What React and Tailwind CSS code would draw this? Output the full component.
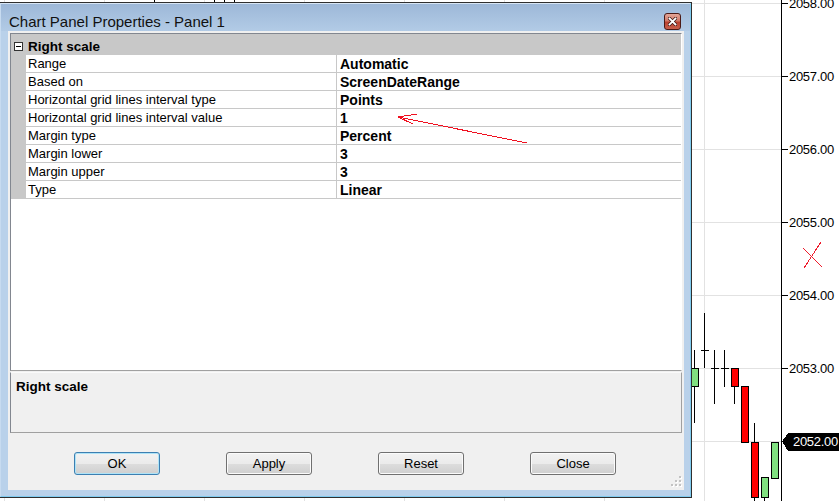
import React from "react";

const gridYs = [3, 76, 149, 222, 295, 368, 441];
const gridXs = [4, 104, 204, 304, 404, 504, 604, 704];
const axisLabels = [
  { y: 3, t: "2058.00" },
  { y: 76, t: "2057.00" },
  { y: 149, t: "2056.00" },
  { y: 222, t: "2055.00" },
  { y: 295, t: "2054.00" },
  { y: 368, t: "2053.00" },
];

// left edge, wick top/bottom, body top/bottom (doji = single tick), fill
const candles = [
  { l: 691, hi: 350, lo: 423, top: 368, bot: 386, fill: "#80e080" },
  { l: 701, hi: 313, lo: 368, doji: 350 },
  { l: 711, hi: 350, lo: 404, doji: 368 },
  { l: 721, hi: 350, lo: 387, doji: 368 },
  { l: 731, hi: 368, lo: 404, top: 368, bot: 386, fill: "#ff0000" },
  { l: 741, hi: 386, lo: 442, top: 386, bot: 442, fill: "#ff0000" },
  { l: 751, hi: 423, lo: 505, top: 442, bot: 497, fill: "#ff0000" },
  { l: 761, hi: 477, lo: 505, top: 477, bot: 497, fill: "#80e080" },
  { l: 771, hi: 442, lo: 478, top: 442, bot: 478, fill: "#80e080" },
];

const rows = [
  ["Range", "Automatic"],
  ["Based on", "ScreenDateRange"],
  ["Horizontal grid lines interval type", "Points"],
  ["Horizontal grid lines interval value", "1"],
  ["Margin type", "Percent"],
  ["Margin lower", "3"],
  ["Margin upper", "3"],
  ["Type", "Linear"],
];

function ChartBackground() {
  return (
    <svg className="absolute left-0 top-0" width="839" height="501" shapeRendering="crispEdges">
      <rect x="0" y="0" width="839" height="501" fill="#ffffff" />
      {gridYs.map((y) => (
        <line key={"h" + y} x1="0" x2="781" y1={y + 0.5} y2={y + 0.5} stroke="#e2e2e2" />
      ))}
      {gridXs.map((x) => (
        <line key={"v" + x} x1={x + 0.5} x2={x + 0.5} y1="0" y2="501" stroke="#e2e2e2" />
      ))}
      {[154, 214, 224, 234].map((x) => (
        <line key={"w" + x} x1={x + 0.5} x2={x + 0.5} y1="0" y2="3" stroke="#000" />
      ))}
      <line x1="781.5" x2="781.5" y1="0" y2="501" stroke="#000" />
      {gridYs.map((y) => (
        <line key={"t" + y} x1="781" x2="788" y1={y + 0.5} y2={y + 0.5} stroke="#000" />
      ))}
      {candles.map((c, i) => {
        const wx = c.l + 3.5;
        return (
          <g key={i}>
            <line x1={wx} x2={wx} y1={c.hi} y2={c.lo} stroke="#000" />
            {c.doji !== undefined ? (
              <line x1={c.l} x2={c.l + 8} y1={c.doji + 0.5} y2={c.doji + 0.5} stroke="#000" />
            ) : (
              <rect x={c.l + 0.5} y={c.top + 0.5} width="7" height={c.bot - c.top} fill={c.fill} stroke="#000" />
            )}
          </g>
        );
      })}
      <g stroke="#ee1c2c" strokeWidth="1">
        <line x1="803" y1="248" x2="822" y2="267" />
        <line x1="804" y1="268" x2="821" y2="242" />
      </g>
      <polygon points="782,441.5 788,433 839,433 839,451 788,451" fill="#000" />
    </svg>
  );
}

function AxisLabels() {
  return (
    <>
      {axisLabels.map((a) => (
        <div
          key={a.t}
          className="absolute left-[789px] text-[13px] leading-[16px] tracking-[-0.3px] text-black"
          style={{ top: a.y - 7 }}
        >
          {a.t}
        </div>
      ))}
      <div className="absolute left-[793px] top-[434px] text-[13px] leading-[16px] tracking-[-0.3px] text-white">
        2052.00
      </div>
    </>
  );
}

function WinButton({ children, isDefault }) {
  return (
    <button
      className={
        "w-[86px] h-[23px] rounded-[3px] border flex items-center justify-center text-[13px] leading-[15px] text-black bg-[linear-gradient(to_bottom,#f2f2f2_0%,#ebebeb_50%,#dddddd_51%,#cfcfcf_100%)] " +
        (isDefault
          ? "border-[#3c7fb1] shadow-[inset_0_0_0_1px_#aee3f7]"
          : "border-[#707070] shadow-[inset_0_0_0_1px_#fbfbfb]")
      }
    >
      {children}
    </button>
  );
}

function CloseButton() {
  return (
    <div className="w-[17px] h-[17px] rounded-[3px] border border-[#4b1a16] bg-[linear-gradient(to_bottom,#e3a698_0%,#d17a69_45%,#b9412f_55%,#c8604c_100%)] flex items-center justify-center">
      <svg width="9" height="9" viewBox="0 0 9 9">
        <path d="M1.5 1.5 L7.5 7.5 M7.5 1.5 L1.5 7.5" stroke="#3b1512" strokeWidth="3.2" strokeLinecap="square" />
        <path d="M1.5 1.5 L7.5 7.5 M7.5 1.5 L1.5 7.5" stroke="#ffffff" strokeWidth="1.8" strokeLinecap="square" />
      </svg>
    </div>
  );
}

function PropertyGrid() {
  return (
    <div className="w-[672px] h-[338px] border-l border-t border-b border-r border-l-[#828790] border-t-[#828790] border-b-[#a0a0a0] border-r-white bg-white flex flex-col">
      <div className="h-[21px] bg-[#c8c8c8] flex items-center pt-[4px] pl-[3px]">
        <div className="w-[9px] h-[9px] border border-[#333] bg-white flex items-center justify-center">
          <div className="w-[5px] h-px bg-black" />
        </div>
        <span className="ml-[5px] text-[13.5px] leading-[17px] font-bold text-black">Right scale</span>
      </div>
      {rows.map(([k, v]) => (
        <div key={k} className="flex h-[18px]">
          <div className="w-[15px] shrink-0 bg-[#c8c8c8]" />
          <div className="w-[310px] shrink-0 border-b border-[#c8c8c8] pl-[2px] text-[13px] leading-[18px] text-black whitespace-nowrap overflow-hidden">
            {k}
          </div>
          <div className="flex-1 border-l border-b border-[#c8c8c8] pl-[3px] text-[14px] leading-[18px] font-bold text-black whitespace-nowrap">
            {v}
          </div>
        </div>
      ))}
    </div>
  );
}

function PropertiesWindow() {
  return (
    <div className="absolute left-[-1px] top-[2px] w-[693px] h-[496px] border border-[#2f2f2f]">
      <div className="w-full h-full border border-t-[#d6e5f5] border-l-[#c7dbf0] border-r-[#7fcbef] border-b-[#7fcbef] bg-[#b9d1ea] flex flex-col">
        <div className="h-[27px] shrink-0 flex items-start bg-[linear-gradient(to_bottom,#9db8d8_0%,#b2cbe6_100%)]">
          <span className="ml-[8px] mt-[10px] text-[15px] leading-[15px] text-[#111] whitespace-nowrap">
            Chart Panel Properties - Panel 1
          </span>
          <div className="ml-auto mt-[9px] mr-[9px]">
            <CloseButton />
          </div>
        </div>
        <div className="flex-1 flex pr-[6px] pl-[7px] pb-[6px]">
          <div className="relative w-[676px] h-[459px] bg-[#f0f0f0] pt-[2px] pl-[2px] flex flex-col">
            <PropertyGrid />
            <div className="mt-[1px] w-[672px] h-[61px] border border-[#a0a0a0] border-l-[#828790] border-t-[#fafafa] bg-[#f0f0f0] pl-[5px] pt-[6px] text-[13.5px] leading-[16px] font-bold text-black">
              Right scale
            </div>
            <div className="mt-[19px] flex gap-[66px] pl-[64px]">
              <WinButton isDefault>OK</WinButton>
              <WinButton>Apply</WinButton>
              <WinButton>Reset</WinButton>
              <WinButton>Close</WinButton>
            </div>
            <svg className="absolute left-[661px] top-[443px]" width="13" height="13" shapeRendering="crispEdges">
              {[
                [10, 2],
                [10, 6],
                [6, 6],
                [10, 10],
                [6, 10],
                [2, 10],
              ].map(([x, y]) => (
                <g key={x + "-" + y}>
                  <rect x={x + 1} y={y + 1} width="2" height="2" fill="#ffffff" />
                  <rect x={x} y={y} width="2" height="2" fill="#c2c2c2" />
                </g>
              ))}
            </svg>
          </div>
        </div>
      </div>
    </div>
  );
}

export default function App() {
  return (
    <div className="relative w-[839px] h-[501px] overflow-hidden bg-white font-['Liberation_Sans',Arial,sans-serif]">
      <ChartBackground />
      <AxisLabels />
      <PropertiesWindow />
      {/* hand-drawn pointer on the interval value row */}
      <svg className="absolute left-0 top-0 pointer-events-none" width="839" height="501" shapeRendering="crispEdges">
        <g stroke="#f01020" strokeWidth="1" fill="none">
          <line x1="527" y1="143" x2="398" y2="117" />
          <line x1="398" y1="117" x2="417" y2="114" />
          <line x1="398" y1="117" x2="413" y2="124" />
        </g>
      </svg>
    </div>
  );
}
